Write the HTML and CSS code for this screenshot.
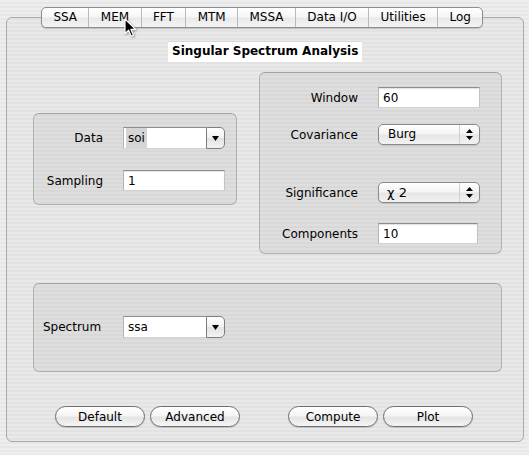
FILE: index.html
```html
<!DOCTYPE html>
<html lang="en">
<head>
    <meta charset="UTF-8">
    <title>SSA-MTM Toolkit</title>
    <link rel="stylesheet" href="styles.css">
</head>
<body>
    <div class="window">
        <div class="tabs">
            <span class="tab">SSA</span>
            <span class="tab">MEM</span>
            <span class="tab">FFT</span>
            <span class="tab">MTM</span>
            <span class="tab">MSSA</span>
            <span class="tab">Data I/O</span>
            <span class="tab">Utilities</span>
            <span class="tab">Log</span>
        </div>

        <div class="panel">
            <div class="title-row">
                <span class="title">Singular Spectrum Analysis</span>
            </div>

            <div class="groups">
                <div class="group group-data">
                    <div class="field-row">
                        <label>Data</label>
                        <div class="combo">
                            <span class="combo-text"><span class="sel">soi</span></span>
                            <span class="combo-btn"><svg width="7" height="5" viewBox="0 0 7 5"><path d="M0 0H7L3.5 5Z"/></svg></span>
                        </div>
                    </div>
                    <div class="field-row row-sampling">
                        <label>Sampling</label>
                        <input class="text-field" type="text" value="1">
                    </div>
                </div>

                <div class="group group-params">
                    <div class="field-row">
                        <label>Window</label>
                        <input class="text-field" type="text" value="60">
                    </div>
                    <div class="field-row row-cov">
                        <label>Covariance</label>
                        <div class="popup">
                            <span class="popup-text">Burg</span>
                            <span class="popup-arrows"><svg width="7" height="11" viewBox="0 0 7 11"><path d="M3.5 0L7 4H0Z M0 7H7L3.5 11Z"/></svg></span>
                        </div>
                    </div>
                    <div class="field-row row-sig">
                        <label>Significance</label>
                        <div class="popup">
                            <span class="popup-text chi">χ 2</span>
                            <span class="popup-arrows"><svg width="7" height="11" viewBox="0 0 7 11"><path d="M3.5 0L7 4H0Z M0 7H7L3.5 11Z"/></svg></span>
                        </div>
                    </div>
                    <div class="field-row row-comp">
                        <label>Components</label>
                        <input class="text-field short" type="text" value="10">
                    </div>
                </div>
            </div>

            <div class="group group-spectrum">
                <div class="field-row">
                    <label>Spectrum</label>
                    <div class="combo">
                        <span class="combo-text">ssa</span>
                        <span class="combo-btn"><svg width="7" height="5" viewBox="0 0 7 5"><path d="M0 0H7L3.5 5Z"/></svg></span>
                    </div>
                </div>
            </div>

            <div class="buttons">
                <button class="button">Default</button>
                <button class="button">Advanced</button>
                <button class="button spaced">Compute</button>
                <button class="button">Plot</button>
            </div>
        </div>

        <svg class="cursor" width="13" height="20" viewBox="0 0 13 20">
            <path d="M1 1V15.5L4.6 12.2L7.2 18.2L9.4 17.2L6.9 11.4H11.6Z" fill="#000" stroke="#fff" stroke-width="1.2" stroke-linejoin="round"/>
        </svg>
    </div>
</body>
</html>
```

FILE: styles.css
```css
body {
    margin: 0;
    width: 529px;
    height: 455px;
    overflow: hidden;
    font-family: "Lucida Grande", "DejaVu Sans", sans-serif;
    font-size: 12px;
    color: #000;
    background: repeating-linear-gradient(to bottom, #eeeeee 0, #eeeeee 2px, #e7e7e7 2px, #e7e7e7 4px);
}

.window {
    position: relative;
    height: 455px;
    padding-top: 7px;
    box-sizing: border-box;
}

/* tab strip */
.tabs {
    position: relative;
    z-index: 1;
    display: flex;
    width: max-content;
    height: 21px;
    margin-left: 41px;
    box-sizing: border-box;
    border: 1px solid #8e8e8e;
    border-radius: 5px;
    background: linear-gradient(#ffffff, #f6f6f6 45%, #e9e9e9 55%, #f4f4f4);
    box-shadow: 0 1px 1px rgba(0, 0, 0, 0.18);
}

.tab {
    padding: 0 11.4px;
    line-height: 19px;
    border-left: 1px solid #b9b9b9;
}

.tab:first-child {
    border-left: none;
}

/* main panel */
.panel {
    height: 425px;
    margin: -11px 5px 0 6px;
    padding: 23px 21px 0 26px;
    box-sizing: border-box;
    border: 1px solid #a9a9a9;
    border-radius: 6px;
    background: rgba(0, 0, 0, 0.018);
}

.title-row {
    height: 21px;
    padding-left: 135px;
}

.title {
    display: inline-block;
    height: 21px;
    padding: 0 4px;
    line-height: 21px;
    font-weight: bold;
    background: #fff;
    box-shadow: inset 0 1px 0 #d8d8d8;
}

.groups {
    display: flex;
    align-items: flex-start;
    margin-top: 10px;
}

.group {
    box-sizing: border-box;
    border: 1px solid #b0b0b0;
    border-top-color: #a2a2a2;
    border-radius: 6px;
    background: rgba(0, 0, 0, 0.045);
}

.group-data {
    width: 204px;
    height: 92px;
    margin-top: 41px;
    padding-top: 13px;
}

.group-params {
    width: 243px;
    height: 182px;
    margin-left: 22px;
    padding-top: 14px;
}

.group-spectrum {
    width: 469px;
    height: 89px;
    margin-top: 29px;
    padding: 32px 0 0 9px;
}

.field-row {
    display: grid;
    grid-template-columns: 69px 102px;
    column-gap: 20px;
    align-items: center;
}

.field-row label {
    text-align: right;
}

.group-params .field-row {
    grid-template-columns: 98px 102px;
}

.group-spectrum .field-row {
    grid-template-columns: 80px 102px;
    column-gap: 0;
}

.group-spectrum .field-row label {
    text-align: left;
}

.row-sampling {
    margin-top: 21px;
}

.row-cov {
    margin-top: 16px;
}

.row-sig {
    margin-top: 37px;
}

.row-comp {
    margin-top: 20px;
}

/* text fields */
.text-field {
    width: 102px;
    height: 21px;
    margin: 0;
    padding: 0 0 0 4px;
    box-sizing: border-box;
    font: inherit;
    color: #000;
    background: #fff;
    border: 1px solid;
    border-color: #8d8d8d #c3c3c3 #d2d2d2 #b5b5b5;
    box-shadow: inset 0 1px 1px rgba(0, 0, 0, 0.12);
    outline: none;
}

.text-field.short {
    width: 100px;
}

/* combo box */
.combo {
    display: flex;
    height: 22px;
}

.combo-text {
    flex: 1;
    display: flex;
    align-items: center;
    padding-left: 2px;
    background: #fff;
    border: 1px solid;
    border-color: #8d8d8d #b5b5b5 #d2d2d2 #b5b5b5;
    border-right: none;
}

.combo-text .sel {
    padding: 3px 2px 4px 2px;
    background: #d5d5d5;
}

.group-spectrum .combo-text {
    padding-left: 4px;
}

.combo-btn {
    width: 17px;
    display: flex;
    align-items: center;
    justify-content: center;
    border: 1px solid #7d7d7d;
    border-radius: 0 5px 5px 0;
    background: linear-gradient(#ffffff, #f1f1f1 50%, #e2e2e2 52%, #f3f3f3);
}

/* popup button */
.popup {
    display: flex;
    height: 21px;
    box-sizing: border-box;
    border: 1px solid #8a8a8a;
    border-radius: 5px;
    background: linear-gradient(#ffffff, #f4f4f4 45%, #e6e6e6 55%, #f2f2f2);
    box-shadow: 0 1px 1px rgba(0, 0, 0, 0.12);
}

.popup-text {
    flex: 1;
    padding-left: 9px;
    line-height: 19px;
}

.popup-text.chi {
    padding-left: 8px;
    font-size: 13px;
}

.popup-arrows {
    width: 19px;
    display: flex;
    align-items: center;
    justify-content: center;
    border-left: 1px solid #d0d0d0;
}

/* bottom buttons */
.buttons {
    display: flex;
    gap: 5px;
    margin-top: 34px;
    padding-left: 22px;
}

.button {
    width: 90px;
    height: 21px;
    padding: 0;
    font: inherit;
    color: #000;
    border: 1px solid #6e6e6e;
    border-radius: 11px;
    background: linear-gradient(#ffffff, #f5f5f5 45%, #e4e4e4 55%, #f6f6f6);
    box-shadow: 0 1px 1px rgba(0, 0, 0, 0.15);
}

.button.spaced {
    margin-left: 43px;
}

.cursor {
    position: absolute;
    left: 124px;
    top: 18px;
    z-index: 2;
    filter: drop-shadow(1px 1px 1px rgba(0, 0, 0, 0.35));
}
```
